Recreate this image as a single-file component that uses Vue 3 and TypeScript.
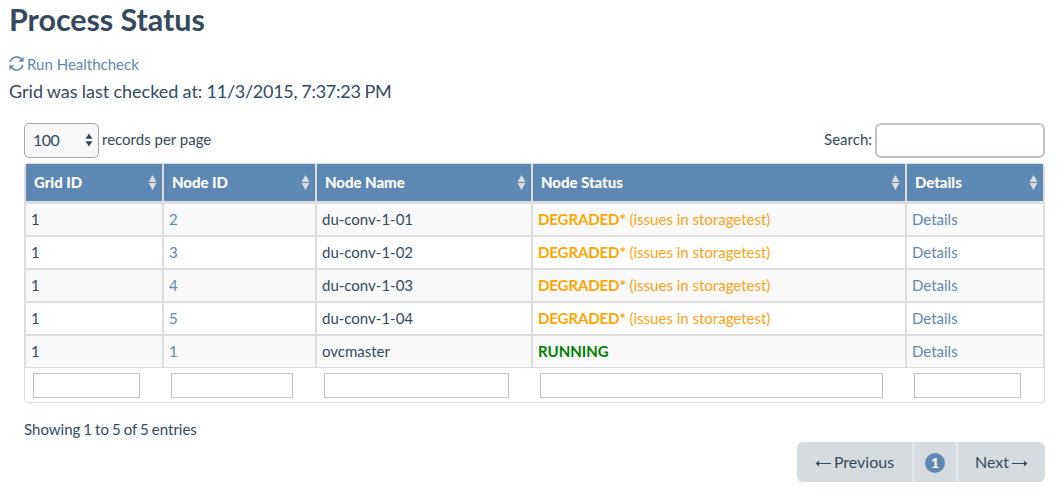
<script setup lang="ts">
interface GridNode {
  grid: number
  id: number
  name: string
  running: boolean
}

const columns: string[] = ['Grid ID', 'Node ID', 'Node Name', 'Node Status', 'Details']

const nodes: GridNode[] = [
  { grid: 1, id: 2, name: 'du-conv-1-01', running: false },
  { grid: 1, id: 3, name: 'du-conv-1-02', running: false },
  { grid: 1, id: 4, name: 'du-conv-1-03', running: false },
  { grid: 1, id: 5, name: 'du-conv-1-04', running: false },
  { grid: 1, id: 1, name: 'ovcmaster', running: true },
]
</script>

<template>
  <main class="page">
    <h1>Process Status</h1>
    <a class="healthcheck">
      <svg class="refresh" viewBox="0 0 15 15" aria-hidden="true">
        <path class="arc" d="M1.300 6.200A6.300 6.300 0 0 1 12.300 3.200M13.700 8.800A6.300 6.300 0 0 1 2.700 11.800" />
        <path class="tip" d="M14.600 0.800V5.800H9.600zM0.400 14.200V9.200H5.400z" />
      </svg>
      <span>Run Healthcheck</span>
    </a>
    <p class="checked">Grid was last checked at: <span>11/3/2015, 7:37:23 PM</span></p>

    <section class="data">
      <div class="toolbar">
        <label class="length">
          <span class="select">
            100
            <svg viewBox="0 0 8 14" aria-hidden="true">
              <path d="M4 0.500L7.500 5.800H0.500zM4 13.500L7.500 8.200H0.500z" />
            </svg>
          </span>
          <span class="caption">records per page</span>
        </label>
        <label class="search">
          <span class="caption">Search:</span>
          <input type="text" />
        </label>
      </div>

      <div class="table">
        <div class="row head">
          <div v-for="column in columns" :key="column" class="cell">
            <span>{{ column }}</span>
            <svg viewBox="0 0 9 15" aria-hidden="true">
              <path d="M4.500 0L8.500 7H0.500zM4.500 15L8.500 8H0.500z" />
            </svg>
          </div>
        </div>
        <div v-for="node in nodes" :key="node.id" class="row body">
          <div class="cell">{{ node.grid }}</div>
          <div class="cell"><a>{{ node.id }}</a></div>
          <div class="cell">{{ node.name }}</div>
          <div class="cell">
            <span v-if="node.running" class="running">RUNNING</span>
            <span v-else class="degraded"><b>DEGRADED*</b> (issues in storagetest)</span>
          </div>
          <div class="cell"><a>Details</a></div>
        </div>
        <div class="row filters">
          <div v-for="column in columns" :key="column"><input type="text" /></div>
        </div>
      </div>

      <p class="info">Showing 1 to 5 of 5 entries</p>
      <nav class="pager">
        <a class="prev">
          <svg class="arrow" viewBox="0 0 16 8" aria-hidden="true">
            <path class="shaft" d="M2 4.500H16" />
            <path d="M0.500 4.500L4.500 1.300L3.600 4.500L4.500 7.700z" />
          </svg>
          Previous
        </a>
        <a class="current"><span>1</span></a>
        <a class="next">
          Next
          <svg class="arrow" viewBox="0 0 16 8" aria-hidden="true">
            <path class="shaft" d="M0 4.500H14" />
            <path d="M15.500 4.500L11.500 1.300L12.400 4.500L11.500 7.700z" />
          </svg>
        </a>
      </nav>
    </section>
  </main>
</template>

<style>
body {
  background: #fff;
}
</style>

<style scoped>
.page {
  box-sizing: border-box;
  width: 1062px;
  height: 498px;
  overflow: hidden;
  padding: 0 17px 0 9px;
  font-family: Lato, "Liberation Sans", sans-serif;
  font-size: 15px;
  line-height: 20px;
  color: #34495e;
}

h1 {
  margin: 0;
  padding-top: 1px;
  font-size: 30.5px;
  line-height: 36px;
  font-weight: 700;
  letter-spacing: -0.06px;
}

a {
  color: #5d88b3;
}

.healthcheck {
  display: flex;
  align-items: center;
  gap: 3px;
  margin-top: 17px;
  height: 20px;
}

.refresh {
  width: 15px;
  height: 15px;
  margin-bottom: 1px;
  fill: #5d88b3;
}

.refresh .arc {
  fill: none;
  stroke: #5d88b3;
  stroke-width: 1.700;
}

.checked {
  margin: 5px 0 0;
  font-size: 18px;
  line-height: 25px;
  word-spacing: -0.4px;
}

.checked span {
  letter-spacing: -0.27px;
}

p {
  margin: 0;
}

.data {
  margin-left: 15px;
}

.toolbar {
  display: flex;
  justify-content: space-between;
  margin-top: 19px;
  height: 35px;
}

.length,
.search {
  display: flex;
  align-items: center;
  gap: 3px;
}

.caption {
  padding-bottom: 3px;
}

.select {
  display: flex;
  align-items: center;
  justify-content: space-between;
  box-sizing: border-box;
  width: 75px;
  height: 35px;
  padding: 0 5px 2px 8px;
  border: 1px solid #a6a6a6;
  border-radius: 5px;
  background: #f8f8f8;
  font-size: 16px;
  letter-spacing: -0.5px;
}

.select svg {
  width: 8px;
  height: 14px;
  fill: #34495e;
}

input {
  display: block;
  box-sizing: border-box;
  margin: 0;
  background: #fff;
}

.search input {
  width: 170px;
  height: 35px;
  border: 2px solid #bdc3c7;
  border-radius: 6px;
}

.table {
  margin-top: 5px;
  border: 1px solid #ddd;
  border-radius: 4px;
}

.row {
  display: grid;
  grid-template-columns: 138px 153px 216px 374px 138px;
}

.cell {
  display: flex;
  align-items: center;
  box-sizing: border-box;
  border: solid #ddd;
  border-width: 1px;
}

.head .cell {
  height: 39px;
  justify-content: space-between;
  padding: 0 5px 0 8px;
  border-width: 0 1px 2px;
  background: #5d88b3;
  color: #fff;
  font-weight: 900;
}

.head span {
  padding-bottom: 2px;
  letter-spacing: -0.03px;
}

.head svg {
  width: 9px;
  height: 15px;
  fill: #ddd;
}

.body .cell {
  height: 33px;
  padding: 0 5px 2px;
}

.body:nth-child(even) .cell {
  background: #f9f9f9;
}

.degraded {
  color: #ffa317;
  white-space: pre;
}

.degraded b {
  font-weight: 700;
  letter-spacing: -0.1px;
  color: orange;
}

.running {
  color: green;
  font-weight: 700;
}

.filters {
  height: 34px;
}

.filters > div {
  padding: 5px 23px 0 8px;
}

.filters input {
  width: 100%;
  height: 25px;
  border: 1px solid #bdc3c7;
}

.info {
  margin-top: 16px;
  word-spacing: -0.8px;
}

.pager {
  display: flex;
  width: 248px;
  height: 40px;
  margin: 3px 0 0 auto;
  overflow: hidden;
  border-radius: 6px;
  background: #d6dbdf;
  font-size: 16px;
}

.pager a {
  display: flex;
  align-items: center;
  justify-content: center;
  gap: 3px;
  box-sizing: border-box;
  color: #34495e;
}

.arrow {
  width: 16px;
  height: 8px;
  margin-top: 2px;
  fill: #34495e;
}

.arrow .shaft {
  stroke: #34495e;
  stroke-width: 1;
}

.prev {
  width: 117px;
  border-right: 2px solid #e4e8ea;
}

.current {
  width: 44px;
  border-right: 2px solid #e4e8ea;
}

.current span {
  width: 20px;
  height: 20px;
  margin-top: 2px;
  border-radius: 50%;
  background: #5d88b3;
  color: #fff;
  font-size: 14px;
  font-weight: 900;
  line-height: 20px;
  text-align: center;
}

.next {
  width: 87px;
}
</style>
